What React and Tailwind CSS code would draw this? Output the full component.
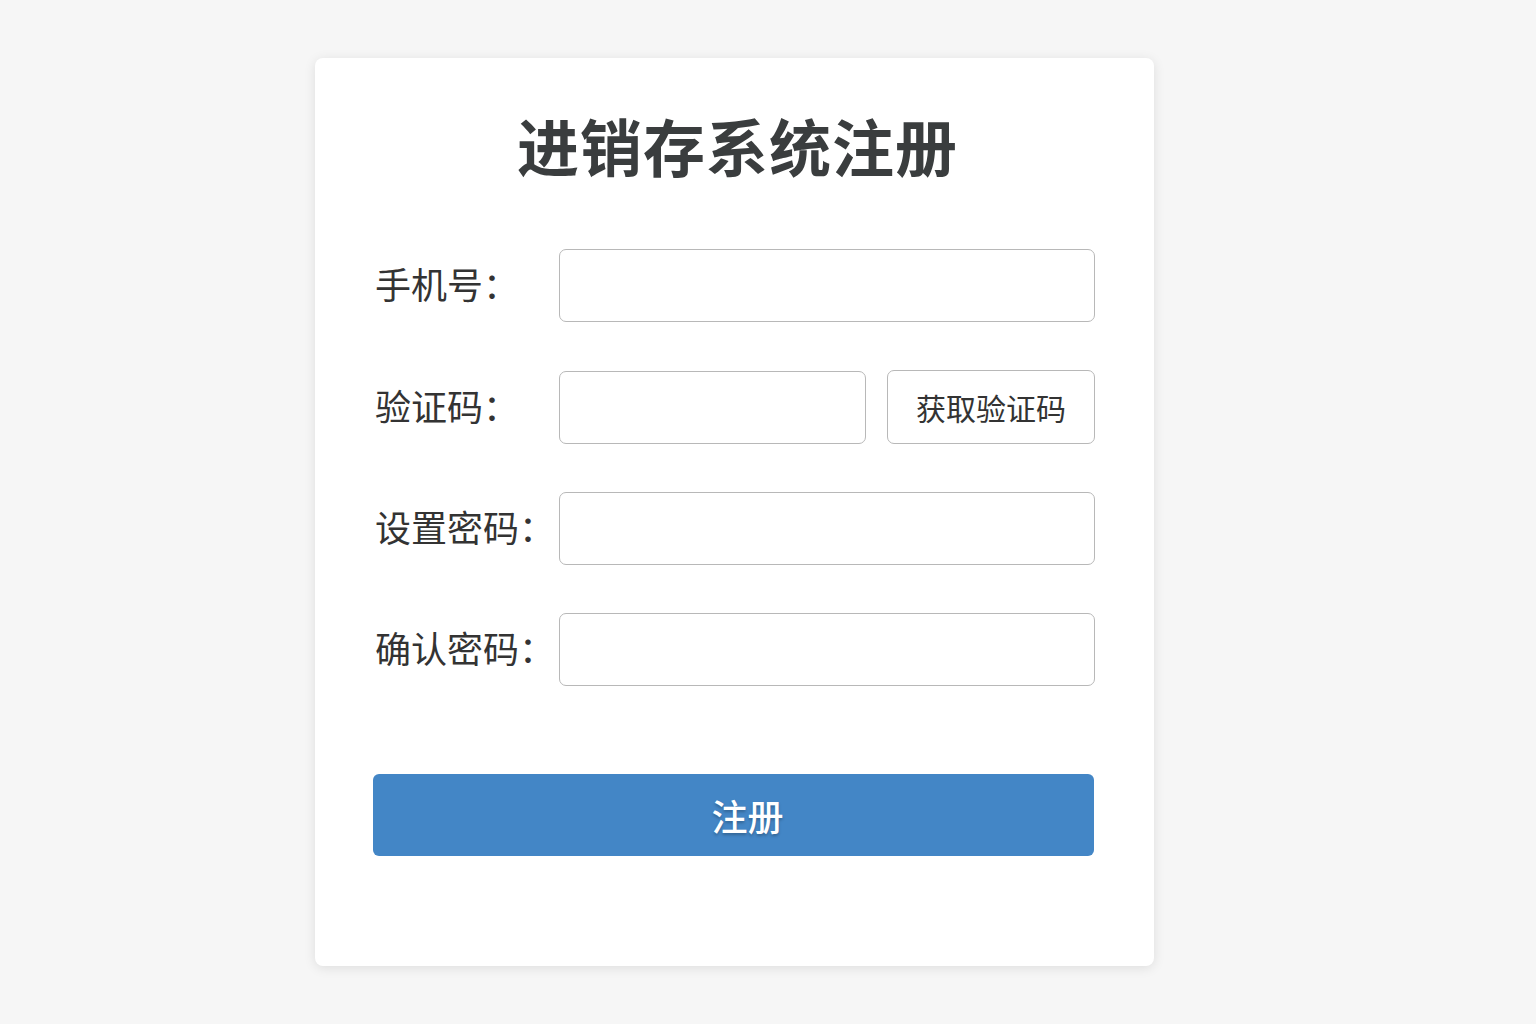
import React from 'react';

const fontStack = { fontFamily: '"Noto Sans CJK SC", "Noto Sans", sans-serif' };

const Field = ({ label, children }) => (
  <div className="flex items-center">
    <label className="w-[186px] shrink-0 text-[36px] leading-none text-[#333333] pl-[2px] pb-[5px]">{label}</label>
    {children}
  </div>
);

const inputCls =
  'h-[73px] border border-[#b8b8b8] rounded-[7px] px-4 text-[24px] outline-none bg-white';

export default function App() {
  return (
    <div className="min-h-screen bg-[#f6f6f6] pt-[58px]" style={fontStack}>
      <div className="ml-[315px] w-[839px] h-[908px] bg-white rounded-[8px] shadow-[0_2px_12px_rgba(0,0,0,0.1)] px-[58px] pt-[56px]">
        <h1 className="text-center text-[62px] leading-none font-bold text-[#3a3d3e] tracking-[1px] pl-[6px]">
          进销存系统注册
        </h1>

        <form className="mt-[73px] flex flex-col gap-[48px]" onSubmit={(e) => e.preventDefault()}>
          <Field label="手机号：">
            <input type="text" className={`${inputCls} w-[536px]`} />
          </Field>
          <Field label="验证码：">
            <input type="text" className={`${inputCls} w-[307px]`} />
            <button
              type="button"
              className="ml-[21px] w-[208px] h-[74px] border border-[#b8b8b8] rounded-[7px] bg-white text-[30px] text-[#333333]"
            >
              获取验证码
            </button>
          </Field>
          <Field label="设置密码：">
            <input type="password" className={`${inputCls} w-[536px]`} />
          </Field>
          <Field label="确认密码：">
            <input type="password" className={`${inputCls} w-[536px]`} />
          </Field>

          <button
            type="submit"
            className="mt-[40px] w-[721px] h-[82px] rounded-[6px] bg-[#4386c6] text-white text-[36px] font-medium pl-[28px] [text-shadow:0_2px_3px_rgba(0,0,0,0.25)]"
          >
            注册
          </button>
        </form>
      </div>
    </div>
  );
}
